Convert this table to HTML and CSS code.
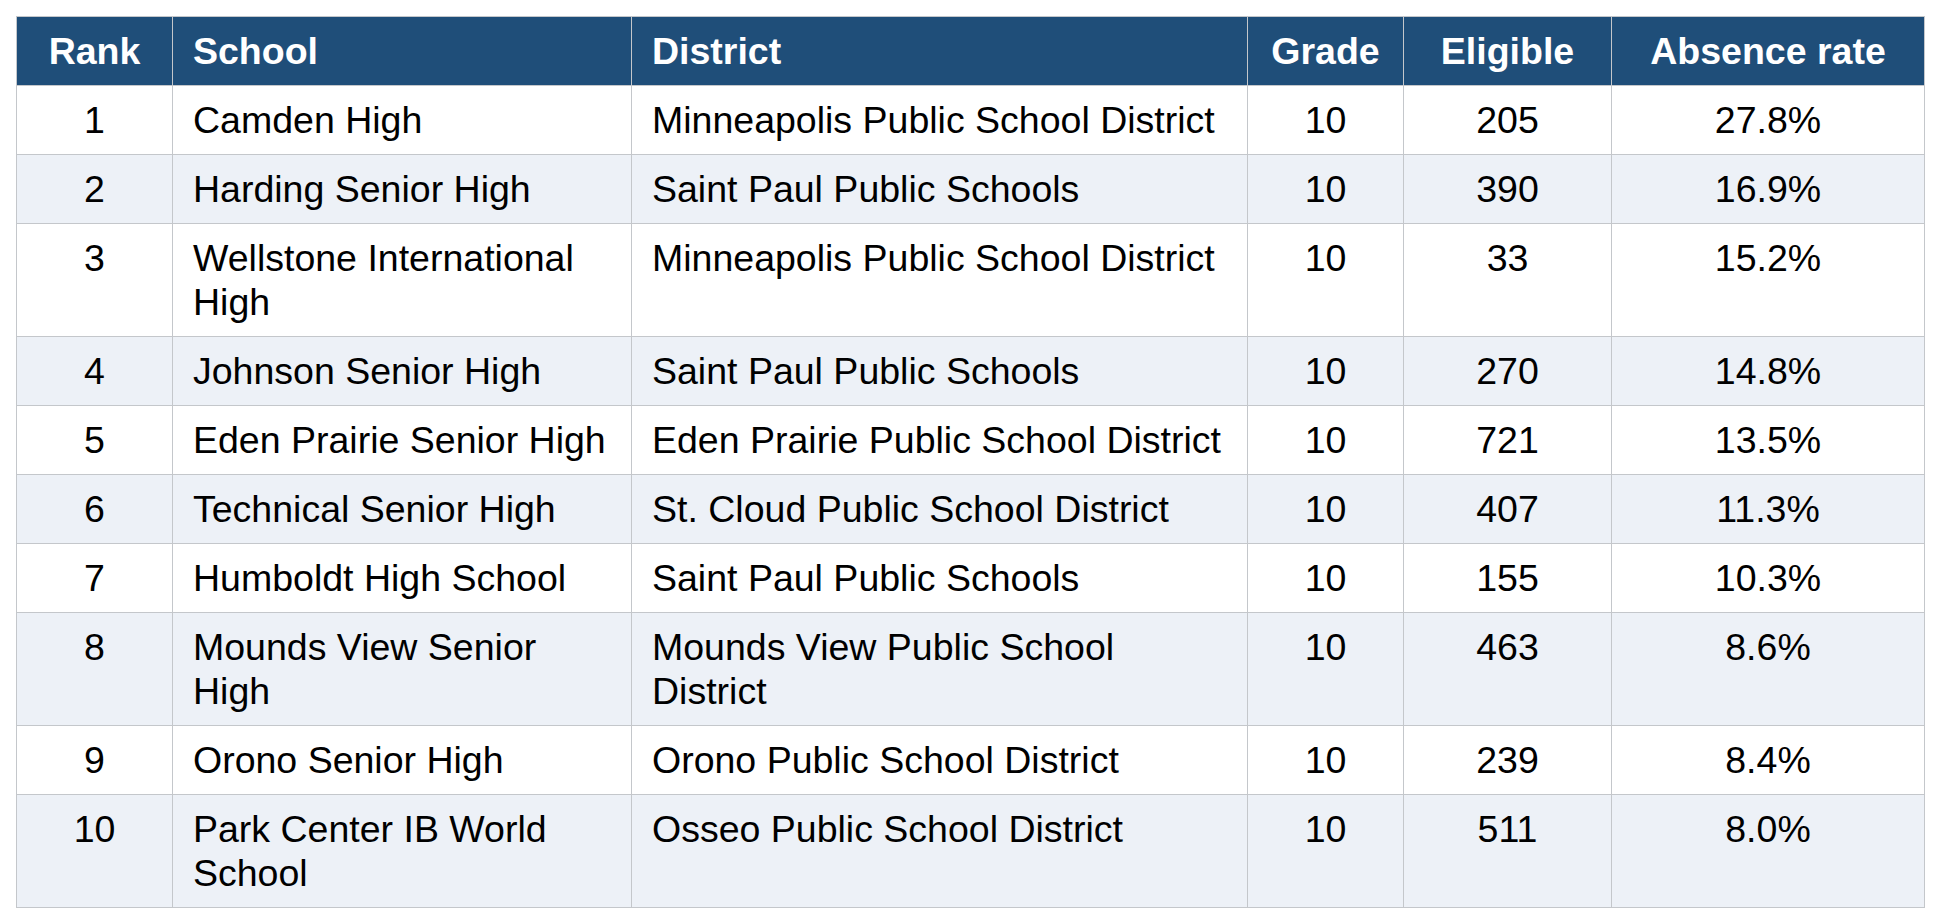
FILE: index.html
```html
<!DOCTYPE html>
<html lang="en">
<head>
<meta charset="utf-8">
<title>School absence ranking</title>
<link rel="stylesheet" href="styles.css">
</head>
<body>
<table class="rank-table">
  <colgroup>
    <col class="c-rank">
    <col class="c-school">
    <col class="c-district">
    <col class="c-grade">
    <col class="c-elig">
    <col class="c-abs">
  </colgroup>
  <thead>
    <tr>
      <th class="ctr">Rank</th>
      <th>School</th>
      <th>District</th>
      <th class="ctr">Grade</th>
      <th class="ctr">Eligible</th>
      <th class="ctr">Absence rate</th>
    </tr>
  </thead>
  <tbody>
    <tr><td class="ctr">1</td><td>Camden High</td><td>Minneapolis Public School District</td><td class="ctr">10</td><td class="ctr">205</td><td class="ctr">27.8%</td></tr>
    <tr><td class="ctr">2</td><td>Harding Senior High</td><td>Saint Paul Public Schools</td><td class="ctr">10</td><td class="ctr">390</td><td class="ctr">16.9%</td></tr>
    <tr><td class="ctr">3</td><td>Wellstone International High</td><td>Minneapolis Public School District</td><td class="ctr">10</td><td class="ctr">33</td><td class="ctr">15.2%</td></tr>
    <tr><td class="ctr">4</td><td>Johnson Senior High</td><td>Saint Paul Public Schools</td><td class="ctr">10</td><td class="ctr">270</td><td class="ctr">14.8%</td></tr>
    <tr><td class="ctr">5</td><td>Eden Prairie Senior High</td><td>Eden Prairie Public School District</td><td class="ctr">10</td><td class="ctr">721</td><td class="ctr">13.5%</td></tr>
    <tr><td class="ctr">6</td><td>Technical Senior High</td><td>St. Cloud Public School District</td><td class="ctr">10</td><td class="ctr">407</td><td class="ctr">11.3%</td></tr>
    <tr><td class="ctr">7</td><td>Humboldt High School</td><td>Saint Paul Public Schools</td><td class="ctr">10</td><td class="ctr">155</td><td class="ctr">10.3%</td></tr>
    <tr><td class="ctr">8</td><td>Mounds View Senior High</td><td>Mounds View Public School District</td><td class="ctr">10</td><td class="ctr">463</td><td class="ctr">8.6%</td></tr>
    <tr><td class="ctr">9</td><td>Orono Senior High</td><td>Orono Public School District</td><td class="ctr">10</td><td class="ctr">239</td><td class="ctr">8.4%</td></tr>
    <tr><td class="ctr">10</td><td>Park Center IB World School</td><td>Osseo Public School District</td><td class="ctr">10</td><td class="ctr">511</td><td class="ctr">8.0%</td></tr>
  </tbody>
</table>
</body>
</html>
```
FILE: styles.css
```css
html, body {
  margin: 0;
  padding: 0;
  background: #ffffff;
}
body {
  padding: 16px;
  font-family: "Liberation Sans", Arial, sans-serif;
}
.rank-table {
  width: 1908px;
  table-layout: fixed;
  border-collapse: collapse;
  font-size: 37.5px;
  line-height: 44px;
  color: #000000;
}
.c-rank { width: 156px; }
.c-school { width: 459px; }
.c-district { width: 616px; }
.c-grade { width: 156px; }
.c-elig { width: 208px; }
.c-abs { width: 313px; }
.rank-table th,
.rank-table td {
  border: 1px solid #c4c7cb;
  padding: 12px 20px;
  vertical-align: top;
  text-align: left;
}
.rank-table th {
  background: #1f4e79;
  color: #ffffff;
  font-weight: bold;
}
.rank-table tbody tr:nth-child(even) td {
  background: #edf1f7;
}
.rank-table .ctr {
  text-align: center;
}
```
